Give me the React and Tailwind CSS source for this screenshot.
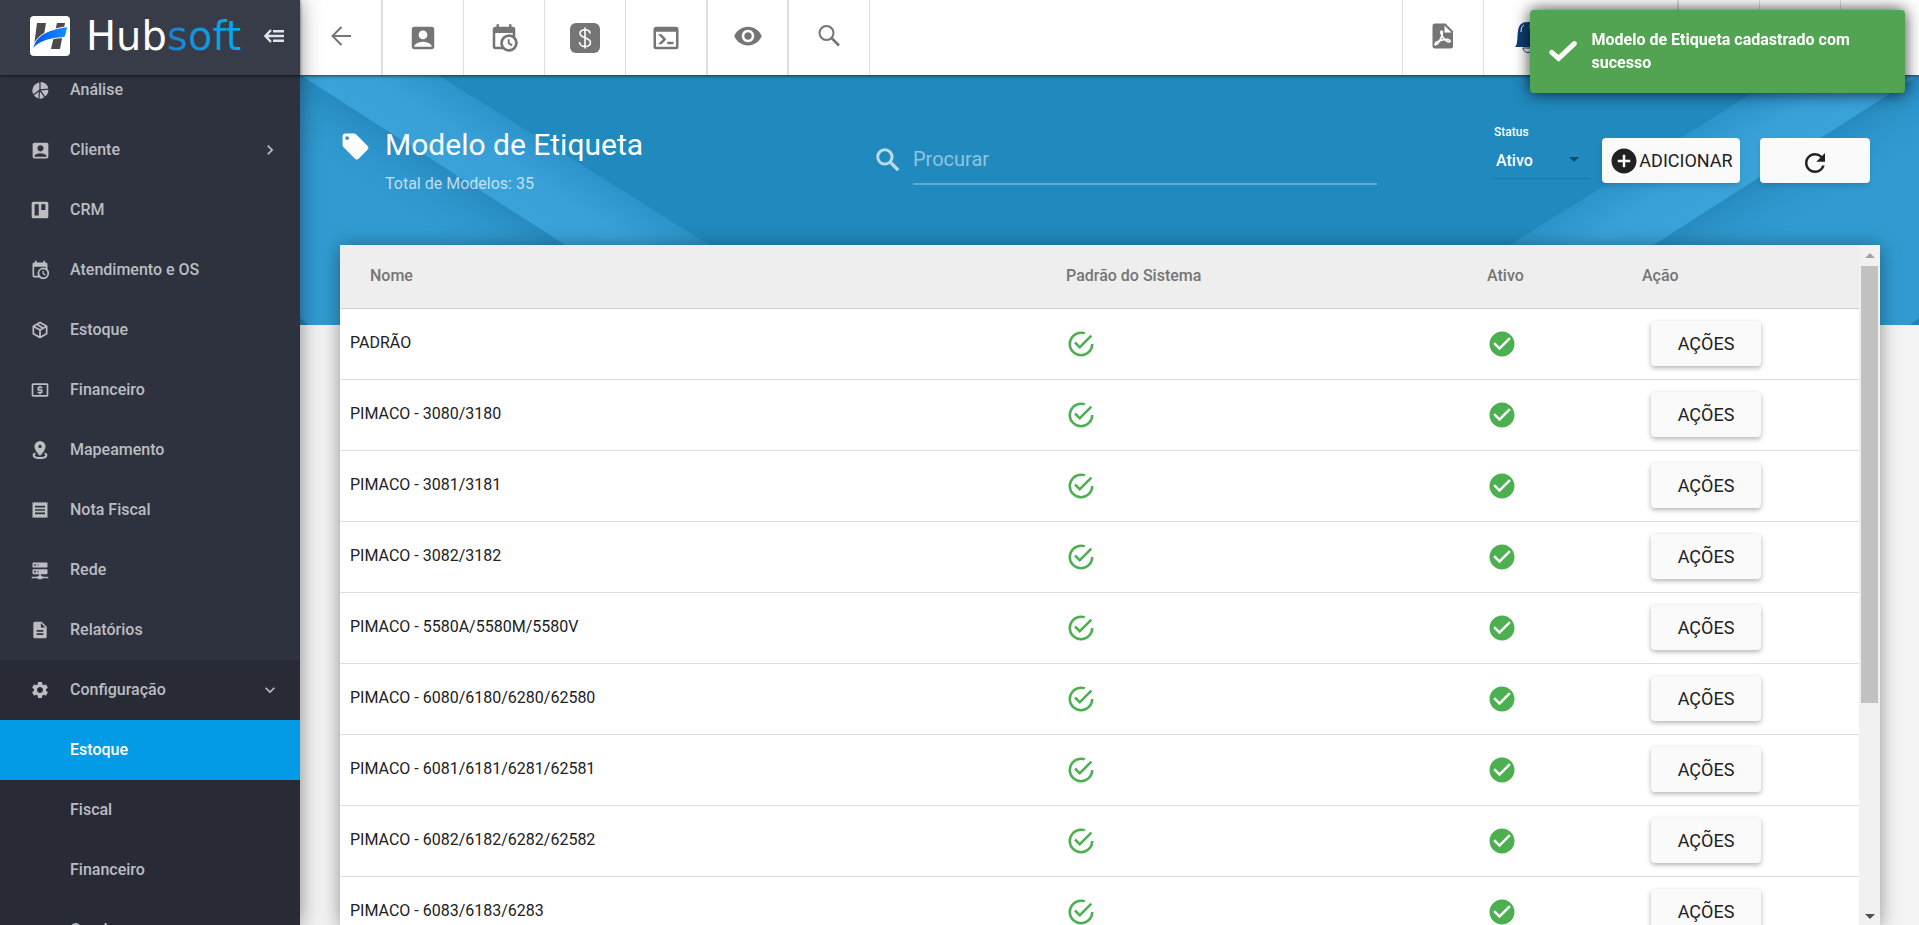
import React, { useState } from 'react';
import {
  MdAccountBox,
  MdAddCircle,
  MdArrowDropDown,
  MdCheckCircle,
  MdChevronRight,
  MdDescription,
  MdExpandMore,
  MdLocalAtm,
  MdReceipt,
  MdRefresh,
  MdSettings,
  MdVisibility,
} from 'react-icons/md';

// ícones que não existem em react-icons/md
const paths = {
  calendarClock:
    'M15,13H16.5V15.82L18.94,17.23L18.19,18.53L15,16.69V13M19,8H5V19H9.67C9.24,18.09 9,17.07 9,16A7,7 0 0,1 16,9C17.07,9 18.09,9.24 19,9.67V8M5,21C3.89,21 3,20.1 3,19V5C3,3.89 3.89,3 5,3H6V1H8V3H16V1H18V3H19A2,2 0 0,1 21,5V11.1C22.24,12.36 23,14.09 23,16A7,7 0 0,1 16,23C14.09,23 12.36,22.24 11.1,21H5M16,11.15A4.85,4.85 0 0,0 11.15,16C11.15,18.68 13.32,20.85 16,20.85A4.85,4.85 0 0,0 20.85,16C20.85,13.32 18.68,11.15 16,11.15Z',
  board:
    'M4,2H20A2,2 0 0,1 22,4V20A2,2 0 0,1 20,22H4A2,2 0 0,1 2,20V4A2,2 0 0,1 4,2M5.5,5V18.5H10.5V5H5.5M13.5,5V12H18.5V5H13.5Z',
  box: 'M21,16.5C21,16.88 20.79,17.21 20.47,17.38L12.57,21.82C12.41,21.94 12.21,22 12,22C11.79,22 11.59,21.94 11.43,21.82L3.53,17.38C3.21,17.21 3,16.88 3,16.5V7.5C3,7.12 3.21,6.79 3.53,6.62L11.43,2.18C11.59,2.06 11.79,2 12,2C12.21,2 12.41,2.06 12.57,2.18L20.47,6.62C20.79,6.79 21,7.12 21,7.5V16.5M12,4.15L10.11,5.22L16,8.61L17.96,7.5L12,4.15M6.04,7.5L12,10.85L13.96,9.75L8.08,6.35L6.04,7.5M5,15.91L11,19.29V12.58L5,9.21V15.91M19,15.91V9.21L13,12.58V19.29L19,15.91Z',
  server:
    'M13,19H14A1,1 0 0,1 15,20H22V22H15A1,1 0 0,1 14,23H10A1,1 0 0,1 9,22H2V20H9A1,1 0 0,1 10,19H11V17H4A1,1 0 0,1 3,16V12A1,1 0 0,1 4,11H20A1,1 0 0,1 21,12V16A1,1 0 0,1 20,17H13V19M4,3H20A1,1 0 0,1 21,4V8A1,1 0 0,1 20,9H4A1,1 0 0,1 3,8V4A1,1 0 0,1 4,3M9,7H10V5H9V7M9,15H10V13H9V15M5,5V7H7V5H5M5,13V15H7V13H5Z',
  console:
    'M20,19V7H4V19H20M20,3A2,2 0 0,1 22,5V19A2,2 0 0,1 20,21H4A2,2 0 0,1 2,19V5C2,3.89 2.9,3 4,3H20M13,17V15H18V17H13M9.58,13L5.57,9H8.4L11.7,12.3C12.09,12.69 12.09,13.33 11.7,13.72L8.42,17H5.59L9.58,13Z',
  tag: 'M5.5,7A1.5,1.5 0 0,1 4,5.5A1.5,1.5 0 0,1 5.5,4A1.5,1.5 0 0,1 7,5.5A1.5,1.5 0 0,1 5.5,7M21.41,11.58L12.41,2.58C12.05,2.22 11.55,2 11,2H4C2.89,2 2,2.89 2,4V11C2,11.55 2.22,12.05 2.59,12.41L11.58,21.41C11.95,21.77 12.45,22 13,22C13.55,22 14.05,21.77 14.41,21.41L21.41,14.41C21.78,14.05 22,13.55 22,13C22,12.44 21.77,11.94 21.41,11.58Z',
  checkOutline:
    'M20,12A8,8 0 0,1 12,20A8,8 0 0,1 4,12A8,8 0 0,1 12,4C12.76,4 13.5,4.11 14.2,4.31L15.77,2.74C14.61,2.26 13.34,2 12,2A10,10 0 0,0 2,12A10,10 0 0,0 12,22A10,10 0 0,0 22,12M7.91,10.08L6.5,11.5L11,16L21,6L19.59,4.58L11,13.17L7.91,10.08Z',
  magnify:
    'M9.5,2.6A6.9,6.9 0 0,1 16.4,9.500C16.4,11.11 15.85,12.5 14.95,13.65L15.1,13.8H15.8L21.1,19.1L19.2,21L13.9,15.7V15L13.7,14.85C12.55,15.8 11.11,16.4 9.5,16.4A6.9,6.9 0 0,1 2.6,9.5A6.9,6.9 0 0,1 9.5,2.6M9.5,5C7,5 5,7 5,9.5C5,12 7,14 9.5,14C12,14 14,12 14,9.5C14,7 12,5 9.5,5Z',
};

function Icon({ name, size }) {
  return (
    <svg width={size} height={size} viewBox="0 0 24 24" fill="currentColor" fillRule="evenodd">
      <path d={paths[name]} />
    </svg>
  );
}

function PieIcon() {
  return (
    <svg width="20" height="20" viewBox="0 0 20 20" fill="currentColor">
      <path d="M10.6 1.9A8 8 0 0 1 18.3 8.6L10.6 9.3Z" />
      <path d="M9.4 2.6V9.6L3.2 14.3A8.2 8.2 0 0 1 9.4 2.6Z" />
      <path d="M4 15.2L8.8 11.6L8.4 18.6A8 8 0 0 1 4 15.2Z" />
      <path d="M10 11.6L14.2 17.2A8 8 0 0 1 9.5 18.7Z" />
      <path d="M10.9 10.5L18.4 9.8A8.2 8.2 0 0 1 15.2 16.4Z" />
    </svg>
  );
}

function PinIcon() {
  return (
    <svg width="20" height="20" viewBox="0 0 20 20" fill="currentColor">
      <path
        fillRule="evenodd"
        d="M10 1A5.6 5.6 0 0 0 4.4 6.6C4.4 10.4 10 16 10 16S15.6 10.4 15.6 6.6A5.6 5.6 0 0 0 10 1ZM10 4.7A1.7 1.7 0 1 1 10 8.1A1.7 1.7 0 0 1 10 4.7Z"
      />
      <path
        d="M5.4 13.4C1.8 15 3.6 18 10 18S18.2 15 14.6 13.4"
        fill="none"
        stroke="currentColor"
        strokeWidth="2"
      />
    </svg>
  );
}

function Logo() {
  return (
    <svg width="40" height="40" viewBox="0 0 40 40">
      <defs>
        <linearGradient id="swoosh" x1="0" x2="1">
          <stop offset="0" stopColor="#0053f0" />
          <stop offset="1" stopColor="#1590ff" />
        </linearGradient>
      </defs>
      <rect width="40" height="40" rx="4" fill="#fff" />
      <path d="M7 7H16L14 19L4 30Z M27 7H35L30 33H21Z" fill="#4a4a4c" />
      <path
        d="M2.5 33C6 20 15 14 37.5 10.5C37 15 36 19 34.5 21.5C24 22 10 24 2.5 33Z"
        fill="url(#swoosh)"
        stroke="#fff"
        strokeWidth="1"
      />
    </svg>
  );
}

const menu = [
  { label: 'Análise', icon: <PieIcon /> },
  { label: 'Cliente', icon: <MdAccountBox size={21} />, arrow: true },
  { label: 'CRM', icon: <Icon name="board" size={20} /> },
  { label: 'Atendimento e OS', icon: <Icon name="calendarClock" size={20} /> },
  { label: 'Estoque', icon: <Icon name="box" size={20} /> },
  { label: 'Financeiro', icon: <MdLocalAtm size={20} /> },
  { label: 'Mapeamento', icon: <PinIcon /> },
  { label: 'Nota Fiscal', icon: <MdReceipt size={20} /> },
  { label: 'Rede', icon: <Icon name="server" size={20} /> },
  { label: 'Relatórios', icon: <MdDescription size={20} /> },
];

const submenu = ['Estoque', 'Fiscal', 'Financeiro', 'Geral'];

const modelos = [
  'PADRÃO',
  'PIMACO - 3080/3180',
  'PIMACO - 3081/3181',
  'PIMACO - 3082/3182',
  'PIMACO - 5580A/5580M/5580V',
  'PIMACO - 6080/6180/6280/62580',
  'PIMACO - 6081/6181/6281/62581',
  'PIMACO - 6082/6182/6282/62582',
  'PIMACO - 6083/6183/6283',
];

function Sidebar() {
  return (
    <aside className="relative z-20 flex w-[300px] shrink-0 flex-col bg-[#2e313e] text-[#bcbdc2] shadow-[0_0_20px_rgba(0,0,0,0.45)]">
      <div className="relative z-10 flex h-[75px] shrink-0 items-center bg-[#383b48] pl-[30px] pb-1 shadow-[0_1px_3px_rgba(0,0,0,0.6)]">
        <Logo />
        <div className="ml-4 font-['DejaVu_Sans',sans-serif] text-[40px] leading-10 text-white">
          Hub
          <span className="bg-linear-to-r from-[#1c80cf] to-[#00aeef] bg-clip-text text-transparent">
            soft
          </span>
        </div>
        <button className="ml-auto mr-4 text-[#e4e4e8]" aria-label="Recolher menu">
          <svg width="20" height="14" viewBox="0 0 20 14" fill="none" stroke="currentColor" strokeWidth="2.4">
            <path d="M7 1L1.5 7L7 13M1.5 7H20M9 2.2H20M9 11.8H20" />
          </svg>
        </button>
      </div>

      {/* lista rolada um pouco para baixo */}
      <nav className="-mt-[15px] flex-1 overflow-hidden font-medium">
        {menu.map((item) => (
          <a key={item.label} href="#" className="flex h-[60px] items-center pl-[30px] pr-5">
            <span className="w-10">{item.icon}</span>
            <span className="flex-1">{item.label}</span>
            {item.arrow && <MdChevronRight size={20} />}
          </a>
        ))}
        <div className="bg-[#282b36]">
          <a href="#" className="flex h-[60px] items-center pl-[30px] pr-5">
            <span className="w-10">
              <MdSettings size={20} />
            </span>
            <span className="flex-1">Configuração</span>
            <MdExpandMore size={20} />
          </a>
          {submenu.map((label, i) => (
            <a
              key={label}
              href="#"
              className={
                i === 0
                  ? 'flex h-[60px] items-center bg-[#039be5] pl-[70px] text-white'
                  : 'flex h-[60px] items-center pl-[70px]'
              }
            >
              {label}
            </a>
          ))}
        </div>
      </nav>
    </aside>
  );
}

function BarButton({ label, children, className = 'w-[81px] border-r' }) {
  return (
    <button
      aria-label={label}
      className={`flex shrink-0 items-center justify-center border-[#dedede] ${className}`}
    >
      {children}
    </button>
  );
}

function TopBar() {
  return (
    <header className="relative z-10 flex h-[75px] shrink-0 bg-white text-[#757575] shadow-[0_1px_3px_rgba(0,0,0,0.6)]">
      <BarButton label="Voltar" className="w-[83px] border-r-2 pb-1">
        <svg width="20" height="20" viewBox="0 0 20 20" fill="none" stroke="currentColor" strokeWidth="2">
          <path d="M10.5 1L1.5 10L10.5 19M1.5 10H20" />
        </svg>
      </BarButton>
      <BarButton label="Clientes">
        <MdAccountBox size={30} />
      </BarButton>
      <BarButton label="Agenda">
        <Icon name="calendarClock" size={30} />
      </BarButton>
      <BarButton label="Financeiro">
        <svg width="30" height="30" viewBox="0 0 30 30">
          <rect width="30" height="30" rx="6" fill="currentColor" />
          <path
            d="M15 4.5V25.5M20 10.5C20 5.5 10 5.5 10 10.5C10 15.5 20.5 14 20.5 19.5C20.5 25 9.5 25 9.5 19"
            fill="none"
            stroke="#fff"
            strokeWidth="1.6"
          />
        </svg>
      </BarButton>
      <BarButton label="Console" className="w-[82px] border-r-2">
        <Icon name="console" size={30} />
      </BarButton>
      <BarButton label="Visualizar" className="w-[81px] border-r-2 pb-1">
        <MdVisibility size={30} />
      </BarButton>
      <BarButton label="Pesquisar" className="w-[81px] border-r pb-1">
        <svg width="24" height="24" viewBox="0 0 24 24" fill="none" stroke="currentColor" strokeWidth="2">
          <circle cx="9.5" cy="9" r="7" />
          <path d="M14.5 14L22 21.5" strokeWidth="2.5" />
        </svg>
      </BarButton>

      <div className="ml-auto flex">
        <BarButton label="Exportar PDF" className="w-[82px] border-x pb-1">
          <svg width="22" height="26" viewBox="0 0 22 26">
            <path
              d="M2.5 0.5H13.5L21 8V23A2.5 2.5 0 0 1 18.5 25.5H2.5A2.5 2.5 0 0 1 0.5 23V3A2.5 2.5 0 0 1 2.5 0.5Z"
              fill="currentColor"
            />
            <path d="M12.5 2.5V9.5H19.5Z" fill="#fff" />
            <path
              d="M9.5 8C11.5 8 10 13.5 7.5 18C5.5 21.5 2.5 23 3 21C3.5 18.5 12 16 16 16.5C20 17.5 18 20 14.5 18C11 16 7.5 9 9.5 8Z"
              fill="none"
              stroke="#fff"
              strokeWidth="1.6"
            />
          </svg>
        </BarButton>
        <button className="flex w-[195px] items-center border-r-2 border-[#dedede] pb-1 pl-7" aria-label="Notificações">
          <svg width="34" height="34" viewBox="0 0 34 34">
            <path d="M11 29A5 4.5 0 0 0 21 29Z" fill="#fff" stroke="#0d3f75" />
            <path d="M3 28C6 25 5 19 6 12C7 5 11 3 16 3S25 5 26 12C27 19 26 25 29 28Z" fill="#0d3f75" />
            <path d="M9 13C9 9 10 7 12 6" fill="none" stroke="#fff" />
            <circle cx="24" cy="7" r="7" fill="#f26b3a" />
          </svg>
        </button>
        <div className="w-[81px] border-r border-[#dedede]" />
        <div className="w-[81px] border-r border-[#dedede]" />
        <div className="w-[78px]" />
      </div>
    </header>
  );
}

// faixa diagonal do fundo; a da direita é a mesma, espelhada
function Stripe({ id, className }) {
  return (
    <svg className={className} width="540" height="250" viewBox="0 0 540 250">
      <defs>
        <linearGradient id={`${id}-band`} gradientUnits="userSpaceOnUse" x1="0" y1="0" x2="39" y2="-62">
          <stop offset="0" stopColor="#39a2d9" />
          <stop offset="0.5" stopColor="#38a0d7" />
          <stop offset="1" stopColor="#2b94ca" />
        </linearGradient>
        <linearGradient id={`${id}-side`} gradientUnits="userSpaceOnUse" x1="0" y1="0" x2="-34" y2="54">
          <stop offset="0" stopColor="#268abf" />
          <stop offset="0.4" stopColor="#2d95cb" />
          <stop offset="1" stopColor="#319bd1" />
        </linearGradient>
      </defs>
      <path d="M0 0H138L537 250H387Z" fill={`url(#${id}-band)`} />
      <path d="M0 0L390 250H0Z" fill={`url(#${id}-side)`} />
      <path d="M0 243L9 250H0Z" fill="#2383b5" />
    </svg>
  );
}

function PageHeader() {
  const [busca, setBusca] = useState('');

  return (
    <div className="flex h-[170px] shrink-0 text-white">
      <div className="mt-[54px] flex w-[533px] shrink-0">
        <div className="pt-0.5">
          <Icon name="tag" size={31} />
        </div>
        <div className="ml-3.5">
          <h1 className="text-[30px] leading-8">Modelo de Etiqueta</h1>
          <p className="mt-[11px] leading-6 text-white/70">Total de Modelos: 35</p>
        </div>
      </div>

      <div className="mt-[59px] mr-[117px] flex h-[51px] flex-1 items-center">
        <label htmlFor="busca" className="w-10 text-white/70">
          <Icon name="magnify" size={30} />
        </label>
        <input
          id="busca"
          value={busca}
          onChange={(e) => setBusca(e.target.value)}
          placeholder="Procurar"
          className="h-[51px] min-w-0 flex-1 border-b-2 border-white/30 text-xl outline-none placeholder:text-white/50"
        />
      </div>

      <div className="mt-[49px] w-24">
        <label htmlFor="status" className="block text-xs leading-4 font-medium">
          Status
        </label>
        <div className="relative mt-[3px]">
          <select
            id="status"
            className="h-9 w-full appearance-none border-b border-[#1b76a4] px-0.5 font-medium outline-none"
          >
            <option>Ativo</option>
            <option>Inativo</option>
          </select>
          <MdArrowDropDown size={24} className="pointer-events-none absolute top-1 right-1 text-[#0f4f70]" />
        </div>
      </div>

      <button className="mt-[63px] ml-3 flex h-[45px] w-[138px] items-center justify-center rounded-sm bg-[#fafafa] text-lg text-[#212121] shadow-md">
        <MdAddCircle size={30} />
        ADICIONAR
      </button>
      <button
        aria-label="Atualizar"
        className="mt-[63px] mr-2.5 ml-5 flex h-[45px] w-[110px] items-center justify-center rounded-sm bg-[#fafafa] pt-1 text-[#212121] shadow-md"
      >
        <MdRefresh size={30} />
      </button>
    </div>
  );
}

function Tabela() {
  return (
    <div className="flex min-h-0 flex-1 bg-white shadow-[0_2px_18px_rgba(0,0,0,0.4)]">
      <div className="flex-1 overflow-hidden">
        <table className="w-full table-fixed border-collapse text-left text-[#212121]">
          <thead className="bg-[#eeeeee] text-[#757575]">
            <tr className="h-[63px] border-b border-[#cfcfcf]">
              <th className="pl-[30px] font-medium">Nome</th>
              <th className="w-[421px] pl-2.5 font-medium">Padrão do Sistema</th>
              <th className="w-[155px] pl-2.5 font-medium">Ativo</th>
              <th className="w-[227px] pl-2.5 font-medium">Ação</th>
            </tr>
          </thead>
          <tbody>
            {modelos.map((nome) => (
              <tr key={nome} className="h-[71px] border-b border-[#dedede]">
                <td className="pb-0.5 pl-2.5">{nome}</td>
                <td className="pl-2.5 text-[#4caf50]">
                  <Icon name="checkOutline" size={30} />
                </td>
                <td className="pl-2.5 text-[#4caf50]">
                  <MdCheckCircle size={30} />
                </td>
                <td className="pl-[19px]">
                  <button className="h-[45px] w-[110px] rounded-sm bg-[#fafafa] text-lg shadow-[0_2px_5px_rgba(0,0,0,0.3)]">
                    AÇÕES
                  </button>
                </td>
              </tr>
            ))}
          </tbody>
        </table>
      </div>

      {/* barra de rolagem */}
      <div className="flex w-[21px] shrink-0 flex-col items-center bg-[#f1f1f1]">
        <div className="flex h-[21px] w-full items-center justify-center">
          <svg width="10" height="5" viewBox="0 0 10 5" fill="#a3a3a3">
            <path d="M5 0L10 5H0Z" />
          </svg>
        </div>
        <div className="w-full flex-1 px-0.5">
          <div className="h-[68%] bg-[#c1c1c1]" />
        </div>
        <div className="flex h-[17px] w-full items-center justify-center">
          <svg width="10" height="5" viewBox="0 0 10 5" fill="#505050">
            <path d="M0 0H10L5 5Z" />
          </svg>
        </div>
      </div>
    </div>
  );
}

function Toast() {
  return (
    <div
      role="status"
      className="fixed top-2.5 right-3.5 z-50 flex w-[375px] items-center rounded-sm bg-[#52a452] pt-[18px] pb-[19px] pl-[18px] pr-4 leading-[23px] font-bold text-white shadow-[0_0_16px_rgba(0,0,0,0.8)]"
    >
      <svg width="32" height="24" viewBox="0 0 32 24" fill="none" stroke="#fff" strokeWidth="5.5" strokeLinecap="round">
        <path d="M4 13.5L11.5 20L28.5 4" />
      </svg>
      <p className="ml-3.5">Modelo de Etiqueta cadastrado com sucesso</p>
    </div>
  );
}

function App() {
  return (
    <div className="flex h-screen overflow-hidden bg-[#f3f3f3] font-[Roboto,sans-serif] text-base">
      <Sidebar />
      <div className="flex min-w-0 flex-1 flex-col">
        <TopBar />
        <main className="relative flex min-h-0 flex-1 flex-col">
          <div className="absolute inset-x-0 top-0 h-[250px] overflow-hidden bg-[#2089be]">
            <Stripe id="esq" className="absolute top-0 left-0" />
            <Stripe id="dir" className="absolute top-0 right-0 -scale-x-100" />
          </div>
          <div className="relative flex min-h-0 flex-1 flex-col pr-[39px] pl-10">
            <PageHeader />
            <Tabela />
          </div>
        </main>
      </div>
      <Toast />
    </div>
  );
}

export default App;
